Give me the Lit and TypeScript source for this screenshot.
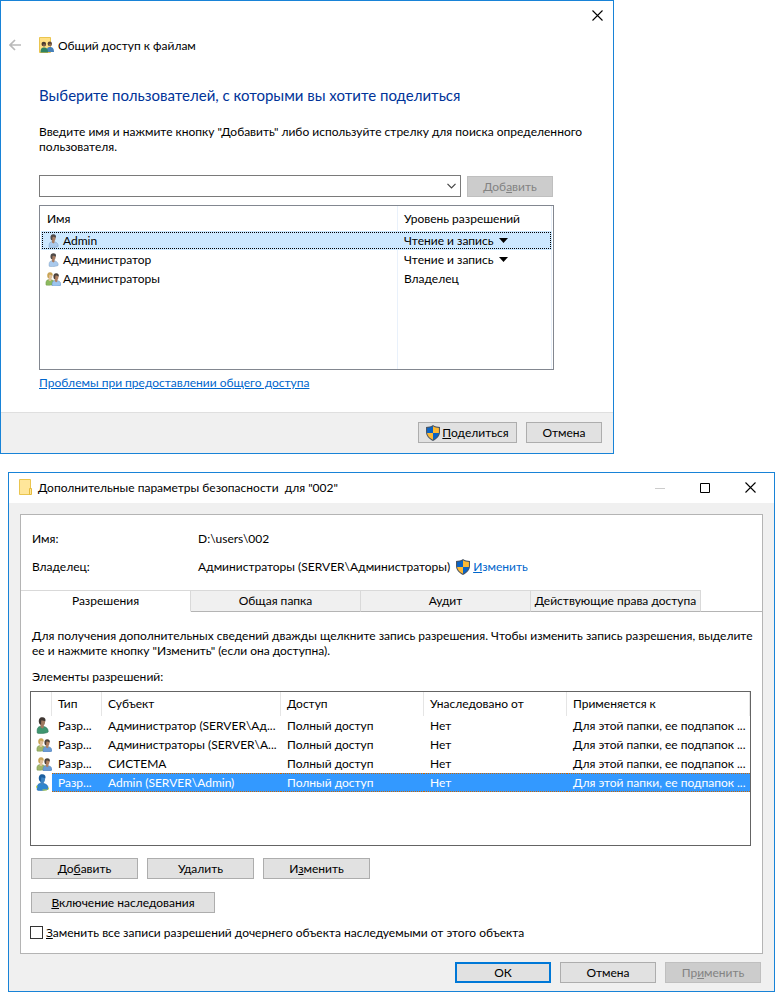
import { LitElement, html, css, svg } from "lit";
import { customElement } from "lit/decorators.js";

const base = css`
  :host {
    display: block;
    font-family: Lato, "Open Sans", sans-serif;
    font-size: 12px;
    line-height: 15px;
    color: #000;
  }
  * {
    box-sizing: border-box;
  }
  svg {
    display: block;
    flex: none;
  }
  .window {
    border: 1px solid #1883d7;
    background: #fff;
    display: flex;
    flex-direction: column;
  }
  .caption {
    border: 0;
    padding: 0;
    background: none;
    display: flex;
    align-items: center;
    justify-content: center;
    color: #000;
  }
  .btn {
    font: inherit;
    line-height: 15px;
    height: 21px;
    padding: 0;
    border: 1px solid #adadad;
    background: #e1e1e1;
    color: #000;
    display: flex;
    align-items: center;
    justify-content: center;
    white-space: nowrap;
  }
  .btn:disabled {
    background: #ccc;
    border-color: #bfbfbf;
    color: #838383;
  }
  .btn.default {
    border: 2px solid #0078d7;
  }
  .link {
    color: #0066cc;
  }
  table {
    border-collapse: separate;
    border-spacing: 0;
    table-layout: fixed;
    width: 100%;
  }
  th {
    font-weight: normal;
    text-align: left;
  }
  th,
  td {
    padding: 0;
    white-space: nowrap;
    overflow: hidden;
    text-overflow: ellipsis;
  }
`;

const closeIcon = html`<svg width="11" height="11" viewBox="0 0 11 11" aria-hidden="true">
  <path d="M.5.5l10 10M10.5.5l-10 10" stroke="currentColor" stroke-width="1.1" fill="none" />
</svg>`;

const shieldIcon = html`<svg width="14" height="16" viewBox="0 0 14 16" aria-hidden="true">
  <path d="M7 0C5 1.400 2.500 1.900 0 1.900V7c0 4 3 7 7 9 4-2 7-5 7-9V1.900C11.500 1.900 9 1.400 7 0z" fill="#4b5663" />
  <path d="M7 1.300C5.400 2.300 3.200 2.800 1.100 2.900V8H7z" fill="#0a63c4" />
  <path d="M7 1.300c1.600 1 3.800 1.500 5.900 1.600V8H7z" fill="#fdb933" />
  <path d="M1.100 8H7v6.800C3.900 13.100 1.400 11 1.100 8z" fill="#fdb933" />
  <path d="M12.900 8H7v6.800c3.100-1.700 5.600-3.800 5.900-6.800z" fill="#0a63c4" />
</svg>`;

const folderIcon = html`<svg width="14" height="17" viewBox="0 0 14 17" aria-hidden="true">
  <path d="M.5.5h11v15H.5z" fill="#ffe69a" stroke="#eac54f" />
  <path d="M10.500 9.500h2v6h-2z" fill="#ffe69a" stroke="#e5bb3c" />
</svg>`;

const sharedFolderIcon = html`<svg width="15" height="16" viewBox="0 0 15 16" aria-hidden="true">
  <path d="M.5.5h11v15H.5z" fill="#ffe084" stroke="#eac54f" />
  <circle cx="10.800" cy="6.800" r="2.200" fill="#5b4534" />
  <circle cx="11.200" cy="8" r="1.300" fill="#8f6a4e" />
  <path d="M7.500 15c0-4 1.300-5 3.500-5s4 1.200 4 5z" fill="#4780b8" />
  <circle cx="4.800" cy="7" r="2.300" fill="#4b3c30" />
  <circle cx="5.200" cy="8.200" r="1.300" fill="#80604a" />
  <path d="M1.500 15.500c0-4 1.300-5 3.500-5s4 1.200 4 5z" fill="#2f8262" />
</svg>`;

type Kind = "user" | "group" | "green" | "pair" | "picked";

const person = (hair: string, face: string, shirt: string, edge: string) => svg`
  <path d="M1 15C.6 11 1.600 9.200 4 8.800l3.500.2c2.500.6 3.900 2.300 3.900 4.800 0 1.700-9.500 2.200-10.400 1.200z" fill=${shirt} stroke=${edge} stroke-width=".5" />
  <path d="M4.200 6.500h3v3.300l-1.300 1-1.700-1z" fill=${face} />
  <ellipse cx="5.800" cy="4.600" rx="2.600" ry="3.400" fill=${face} />
  <path d="M2.700 5.500C2 2.200 3.400.3 5.800.3c2.500 0 3.500 1.500 2.900 4-.9-.6-2.400-1.100-3.700-1.200-.3 1-.4 2.500-.3 3.700-.9.500-1.800-.3-2-1.300z" fill=${hair} />`;

const principalIcon = (kind: Kind) => {
  if (kind === "user")
    return html`<svg width="11" height="14" viewBox="0 0 12 16" aria-hidden="true">${person("#4f4a48", "#a87d62", "#a9c9ec", "#6f95bf")}</svg>`;
  if (kind === "green")
    return html`<svg width="13" height="17" viewBox="0 0 12 16" aria-hidden="true">${person("#3f3732", "#a07a60", "#3f9670", "#2c7455")}</svg>`;
  if (kind === "picked")
    return html`<svg width="13" height="17" viewBox="0 0 12 16" aria-hidden="true">${person("#1c5f9f", "#3d84c4", "#2f86cf", "#1a64a8")}
      <path d="M0 11h1v2H0zM11 13h1v1.500h-1zM6 14.500h4v1H6z" fill="#c8dd3a" /></svg>`;
  const front = kind === "group" ? "#9cc4ee" : "#6a9bd4";
  const back = kind === "group" ? "#8cba5e" : "#9fb56a";
  return html`<svg width="16" height="14" viewBox="0 0 17 15" aria-hidden="true">
    <g transform="scale(.92)">${person("#c9a455", "#e0c098", back, "#6f9148")}</g>
    <g transform="translate(6.600 1) scale(.92)">${person("#4a4039", "#b08060", front, "#527fb4")}</g>
  </svg>`;
};

@customElement("share-wizard")
export class ShareWizard extends LitElement {
  static styles = [
    base,
    css`
      .window {
        width: 100%;
      }
      .titlebar {
        display: flex;
        justify-content: flex-end;
        padding: 9px 10px 0 0;
      }
      .nav {
        display: flex;
        align-items: center;
        padding: 16px 8px 0;
        height: 32px;
      }
      .back {
        color: #b9b9b9;
        margin-right: 18px;
      }
      .nav span {
        margin-left: 4px;
      }
      .body {
        padding: 32px 59px 22px 38px;
      }
      h1 {
        margin: 0 0 19px;
        font-size: 15px;
        line-height: 20px;
        font-weight: normal;
        color: #003399;
        white-space: nowrap;
      }
      p {
        margin: 0 0 21px;
        white-space: nowrap;
      }
      .entry {
        display: flex;
        align-items: center;
        margin: 0 1px 8px 0;
        gap: 6px;
      }
      .combo {
        flex: 1;
        display: grid;
        align-items: center;
        justify-items: end;
      }
      .combo select {
        grid-area: 1 / 1;
        width: 100%;
        height: 22px;
        border: 1px solid #7a7a7a;
        border-radius: 0;
        background: #fff;
        appearance: none;
        font: inherit;
      }
      .combo svg {
        grid-area: 1 / 1;
        margin-right: 5px;
        pointer-events: none;
      }
      .add {
        width: 86px;
      }
      .list {
        border: 1px solid #828790;
        padding: 0 1px;
        margin-bottom: 5px;
      }
      .list table {
        height: 163px;
      }
      th,
      td {
        border-right: 1px solid #e9f1fb;
      }
      th {
        height: 25px;
        padding-left: 6px;
      }
      th.level {
        width: 154px;
      }
      td {
        height: 19px;
      }
      .filler td {
        height: auto;
      }
      .picked {
        background: #cce8ff;
        outline: 1px dotted #000;
        outline-offset: -2px;
      }
      .picked td {
        border-color: #cce8ff;
      }
      .name {
        display: flex;
        align-items: center;
        gap: 2px;
        padding-left: 4px;
      }
      .pic {
        width: 16px;
        display: flex;
        justify-content: center;
      }
      .access {
        display: flex;
        align-items: center;
        gap: 5px;
        padding-left: 6px;
      }
      .access select {
        appearance: none;
        border: 0;
        padding: 0;
        background: none;
        font: inherit;
        color: inherit;
        field-sizing: content;
      }
      footer {
        display: flex;
        justify-content: flex-end;
        gap: 9px;
        border-top: 1px solid #dfdfdf;
        background: #f0f0f0;
        padding: 9px 11px 10px;
      }
      .share {
        width: 99px;
        gap: 2px;
      }
      .cancel {
        width: 76px;
      }
    `,
  ];

  private rows: { name: string; kind: Kind; access: string; menu: boolean }[] = [
    { name: "Admin", kind: "user", access: "Чтение и запись", menu: true },
    { name: "Администратор", kind: "user", access: "Чтение и запись", menu: true },
    { name: "Администраторы", kind: "group", access: "Владелец", menu: false },
  ];

  render() {
    return html`<section class="window">
      <div class="titlebar"><button class="caption" aria-label="Закрыть">${closeIcon}</button></div>
      <div class="nav">
        <button class="caption back" aria-label="Назад">
          <svg width="12" height="12" viewBox="0 0 12 12" aria-hidden="true">
            <path d="M12 6H1M6 1L1 6l5 5" stroke="currentColor" stroke-width="1.700" fill="none" />
          </svg>
        </button>
        ${sharedFolderIcon}<span>Общий доступ к файлам</span>
      </div>
      <div class="body">
        <h1>Выберите пользователей, с которыми вы хотите поделиться</h1>
        <p>
          Введите имя и нажмите кнопку "Добавить" либо используйте стрелку для поиска определенного<br />пользователя.
        </p>
        <div class="entry">
          <div class="combo">
            <select aria-label="Имя пользователя"><option></option></select>
            <svg width="9" height="6" viewBox="0 0 9 6" aria-hidden="true">
              <path d="M.5.8l4 4 4-4" stroke="#444" stroke-width="1.200" fill="none" />
            </svg>
          </div>
          <button class="btn add" disabled><span>Доб<u>а</u>вить</span></button>
        </div>
        <div class="list">
          <table>
            <thead>
              <tr><th>Имя</th><th class="level">Уровень разрешений</th></tr>
            </thead>
            <tbody>
              ${this.rows.map(
                (r, i) => html`<tr class=${i === 0 ? "picked" : ""}>
                  <td><div class="name"><span class="pic">${principalIcon(r.kind)}</span>${r.name}</div></td>
                  <td>
                    <div class="access">
                      ${r.menu
                        ? html`<select aria-label="Уровень разрешений"><option>${r.access}</option></select>
                            <svg width="9" height="5" viewBox="0 0 9 5" aria-hidden="true"><path d="M0 0h9L4.500 5z" /></svg>`
                        : r.access}
                    </div>
                  </td>
                </tr>`
              )}
              <tr class="filler"><td></td><td></td></tr>
            </tbody>
          </table>
        </div>
        <a class="link" href="#">Проблемы при предоставлении общего доступа</a>
      </div>
      <footer>
        <button class="btn share">${shieldIcon}<span><u>П</u>оделиться</span></button>
        <button class="btn cancel">Отмена</button>
      </footer>
    </section>`;
  }
}

@customElement("security-settings")
export class SecuritySettings extends LitElement {
  static styles = [
    base,
    css`
      .window {
        background: #f0f0f0;
      }
      .titlebar {
        display: flex;
        align-items: center;
        height: 30px;
        padding: 0 18px 1px 10px;
        background: #fff;
      }
      .titlebar .name {
        flex: 1;
        margin-left: 5px;
        white-space: pre;
      }
      .controls {
        display: flex;
        gap: 35px;
      }
      .min {
        color: #ccc;
      }
      .panel {
        margin: 11px 11px 0;
        border: 1px solid #b4b4b4;
        background: #fff;
      }
      .facts {
        display: grid;
        grid-template-columns: 166px 1fr;
        row-gap: 13px;
        margin: 0;
        padding: 16px 11px;
      }
      dd {
        margin: 0;
        display: flex;
        align-items: center;
        height: 15px;
      }
      .change {
        display: flex;
        align-items: center;
        gap: 3px;
        margin-left: 6px;
        text-decoration: none;
      }
      .tabs {
        display: flex;
      }
      .tab {
        font: inherit;
        line-height: 15px;
        width: 170px;
        height: 22px;
        padding: 0 0 2px;
        border: solid #d9d9d9;
        border-width: 1px 1px 0 0;
        border-bottom: 1px solid #b4b4b4;
        background: #f0f0f0;
        color: #000;
        white-space: nowrap;
      }
      .tab.on {
        background: #fff;
        border-bottom-color: #fff;
      }
      .rule {
        flex: 1;
        border-bottom: 1px solid #b4b4b4;
      }
      .page {
        padding: 16px 11px 13px 9px;
      }
      p {
        margin: 0 0 11px 2px;
        white-space: nowrap;
      }
      p.label {
        margin-bottom: 7px;
      }
      .list {
        border: 1px solid #646464;
        min-height: 155px;
      }
      th {
        height: 24px;
        border-right: 1px solid #e5e5e5;
        padding: 0 0 2px 6px;
      }
      .c0 {
        width: 21px;
      }
      .c1 {
        width: 50px;
      }
      .c2 {
        width: 179px;
      }
      .c3 {
        width: 143px;
      }
      td {
        height: 19px;
        padding: 0 0 0 6px;
      }
      tbody td:first-child {
        padding: 0 0 0 5px;
        overflow: visible;
      }
      .picked td + td {
        color: #fff;
        background:
          repeating-linear-gradient(90deg, #cc6600 0 1px, #3399ff 1px 2px) top / 100% 1px no-repeat,
          repeating-linear-gradient(90deg, #cc6600 0 1px, #3399ff 1px 2px) bottom / 100% 1px no-repeat,
          #3399ff;
      }
      .row {
        display: flex;
        gap: 9px;
        margin: 12px 1px 0;
      }
      .row + .row {
        margin-top: 13px;
      }
      .std {
        width: 107px;
      }
      .wide {
        width: 184px;
      }
      .check {
        display: flex;
        align-items: center;
        gap: 3px;
        margin-top: 12px;
      }
      .check input {
        appearance: none;
        width: 13px;
        height: 13px;
        margin: 0;
        border: 1px solid #333;
        background: #fff;
      }
      footer {
        display: flex;
        justify-content: flex-end;
        gap: 9px;
        padding: 8px 13px;
      }
      footer .btn {
        width: 96px;
      }
    `,
  ];

  private rows: { kind: Kind; subject: string }[] = [
    { kind: "green", subject: "Администратор (SERVER\\Ад..." },
    { kind: "pair", subject: "Администраторы (SERVER\\А..." },
    { kind: "pair", subject: "СИСТЕМА" },
    { kind: "picked", subject: "Admin (SERVER\\Admin)" },
  ];

  render() {
    return html`<section class="window">
      <div class="titlebar">
        ${folderIcon}<span class="name">Дополнительные параметры безопасности  для "002"</span>
        <div class="controls">
          <button class="caption min" aria-label="Свернуть">
            <svg width="10" height="10" viewBox="0 0 10 10" aria-hidden="true"><path d="M0 5h10v1H0z" fill="currentColor" /></svg>
          </button>
          <button class="caption" aria-label="Развернуть">
            <svg width="10" height="10" viewBox="0 0 10 10" aria-hidden="true">
              <path d="M.5.5h9v9h-9z" fill="none" stroke="currentColor" />
            </svg>
          </button>
          <button class="caption" aria-label="Закрыть">${closeIcon}</button>
        </div>
      </div>
      <div class="panel">
        <dl class="facts">
          <dt>Имя:</dt>
          <dd>D:\\users\\002</dd>
          <dt>Владелец:</dt>
          <dd>
            Администраторы (SERVER\\Администраторы)
            <a class="link change" href="#">${shieldIcon}<span><u>И</u>зменить</span></a>
          </dd>
        </dl>
        <div class="tabs" role="tablist">
          ${["Разрешения", "Общая папка", "Аудит", "Действующие права доступа"].map(
            (t, i) => html`<button class="tab ${i === 0 ? "on" : ""}" role="tab" aria-selected=${i === 0}>${t}</button>`
          )}
          <span class="rule"></span>
        </div>
        <div class="page">
          <p>
            Для получения дополнительных сведений дважды щелкните запись разрешения. Чтобы изменить запись разрешения, выделите<br />ее
            и нажмите кнопку "Изменить" (если она доступна).
          </p>
          <p class="label">Элементы разрешений:</p>
          <div class="list">
            <table>
              <thead>
                <tr>
                  <th class="c0"></th>
                  <th class="c1">Тип</th>
                  <th class="c2">Субъект</th>
                  <th class="c3">Доступ</th>
                  <th class="c3">Унаследовано от</th>
                  <th>Применяется к</th>
                </tr>
              </thead>
              <tbody>
                ${this.rows.map(
                  (r) => html`<tr class=${r.kind === "picked" ? "picked" : ""}>
                    <td>${principalIcon(r.kind)}</td>
                    <td>Разр...</td>
                    <td>${r.subject}</td>
                    <td>Полный доступ</td>
                    <td>Нет</td>
                    <td>Для этой папки, ее подпапок ...</td>
                  </tr>`
                )}
              </tbody>
            </table>
          </div>
          <div class="row">
            <button class="btn std"><span>До<u>б</u>авить</span></button>
            <button class="btn std"><span>У<u>д</u>алить</span></button>
            <button class="btn std"><span>И<u>з</u>менить</span></button>
          </div>
          <div class="row">
            <button class="btn wide"><span><u>В</u>ключение наследования</span></button>
          </div>
          <label class="check">
            <input type="checkbox" />
            <span><u>З</u>аменить все записи разрешений дочернего объекта наследуемыми от этого объекта</span>
          </label>
        </div>
      </div>
      <footer>
        <button class="btn default">ОК</button>
        <button class="btn">Отмена</button>
        <button class="btn" disabled><span>Пр<u>и</u>менить</span></button>
      </footer>
    </section>`;
  }
}

@customElement("app-root")
export class AppRoot extends LitElement {
  static styles = css`
    :host {
      display: flex;
      flex-direction: column;
      gap: 18px;
      background: #fff;
    }
    share-wizard {
      max-width: 614px;
    }
    security-settings {
      margin: 0 5px 6px 8px;
    }
  `;

  render() {
    return html`<share-wizard></share-wizard><security-settings></security-settings>`;
  }
}
